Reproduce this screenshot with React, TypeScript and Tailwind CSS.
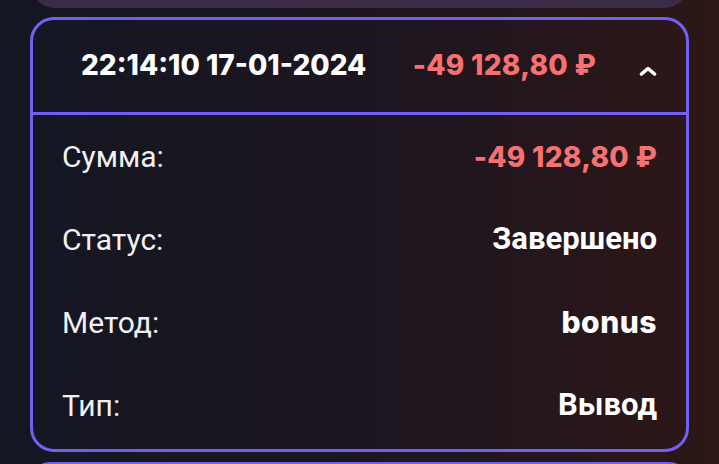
interface RowProps {
    label: string;
    value: string;
    valueClass?: string;
}

const Row: React.FC<RowProps> = ({ label, value, valueClass = "font-['Roboto'] font-bold text-[31px] text-white" }) => (
    <div className="flex h-[83px] items-center justify-between pl-[29px] pr-[29px]">
        <span className="font-['Roboto'] text-[30px] text-[#f1f1f4]">{label}</span>
        <span className={valueClass}>{value}</span>
    </div>
);

const amountClass = "font-['Inter'] font-extrabold text-[28px] text-[#f87171] tracking-[0.3px]";

export default function App() {
    return (
        <div className="h-[464px] w-[719px] overflow-hidden bg-gradient-to-r from-[#131722] via-[#1c1520] to-[#2d1717] px-[30px]">
            <div className="mx-[2px] mt-[-40px] h-[48px] rounded-[22px] bg-[#3a2b46]" />

            <div className="mt-[9px] rounded-[24px] border-[3px] border-[#7360f0] pb-[2px]">
                <div className="flex h-[92px] items-center pb-[2px] pl-[48px] pr-[29px]">
                    <span className="font-['Inter'] text-[28px] font-extrabold text-white">
                        22:14:10 17-01-2024
                    </span>
                    <span className={`ml-auto ${amountClass}`}>-49 128,80 ₽</span>
                    <svg className="ml-[43px] mt-[12px]" width="18" height="10" viewBox="0 0 18 10" fill="none">
                        <path d="M2.5 8 L9 2.5 L15.5 8" stroke="white" strokeWidth="3.6" strokeLinecap="round" strokeLinejoin="round" />
                    </svg>
                </div>
                <div className="h-[3px] bg-[#7360f0]" />
                <Row label="Сумма:" value="-49 128,80 ₽" valueClass={amountClass} />
                <Row label="Статус:" value="Завершено" />
                <Row label="Метод:" value="bonus" valueClass="font-['Inter'] font-extrabold text-[30px] tracking-[0.5px] text-white" />
                <Row label="Тип:" value="Вывод" />
            </div>

            <div className="mt-[10px] h-[40px] rounded-[24px] border-[3px] border-[#7360f0]" />
        </div>
    );
}
